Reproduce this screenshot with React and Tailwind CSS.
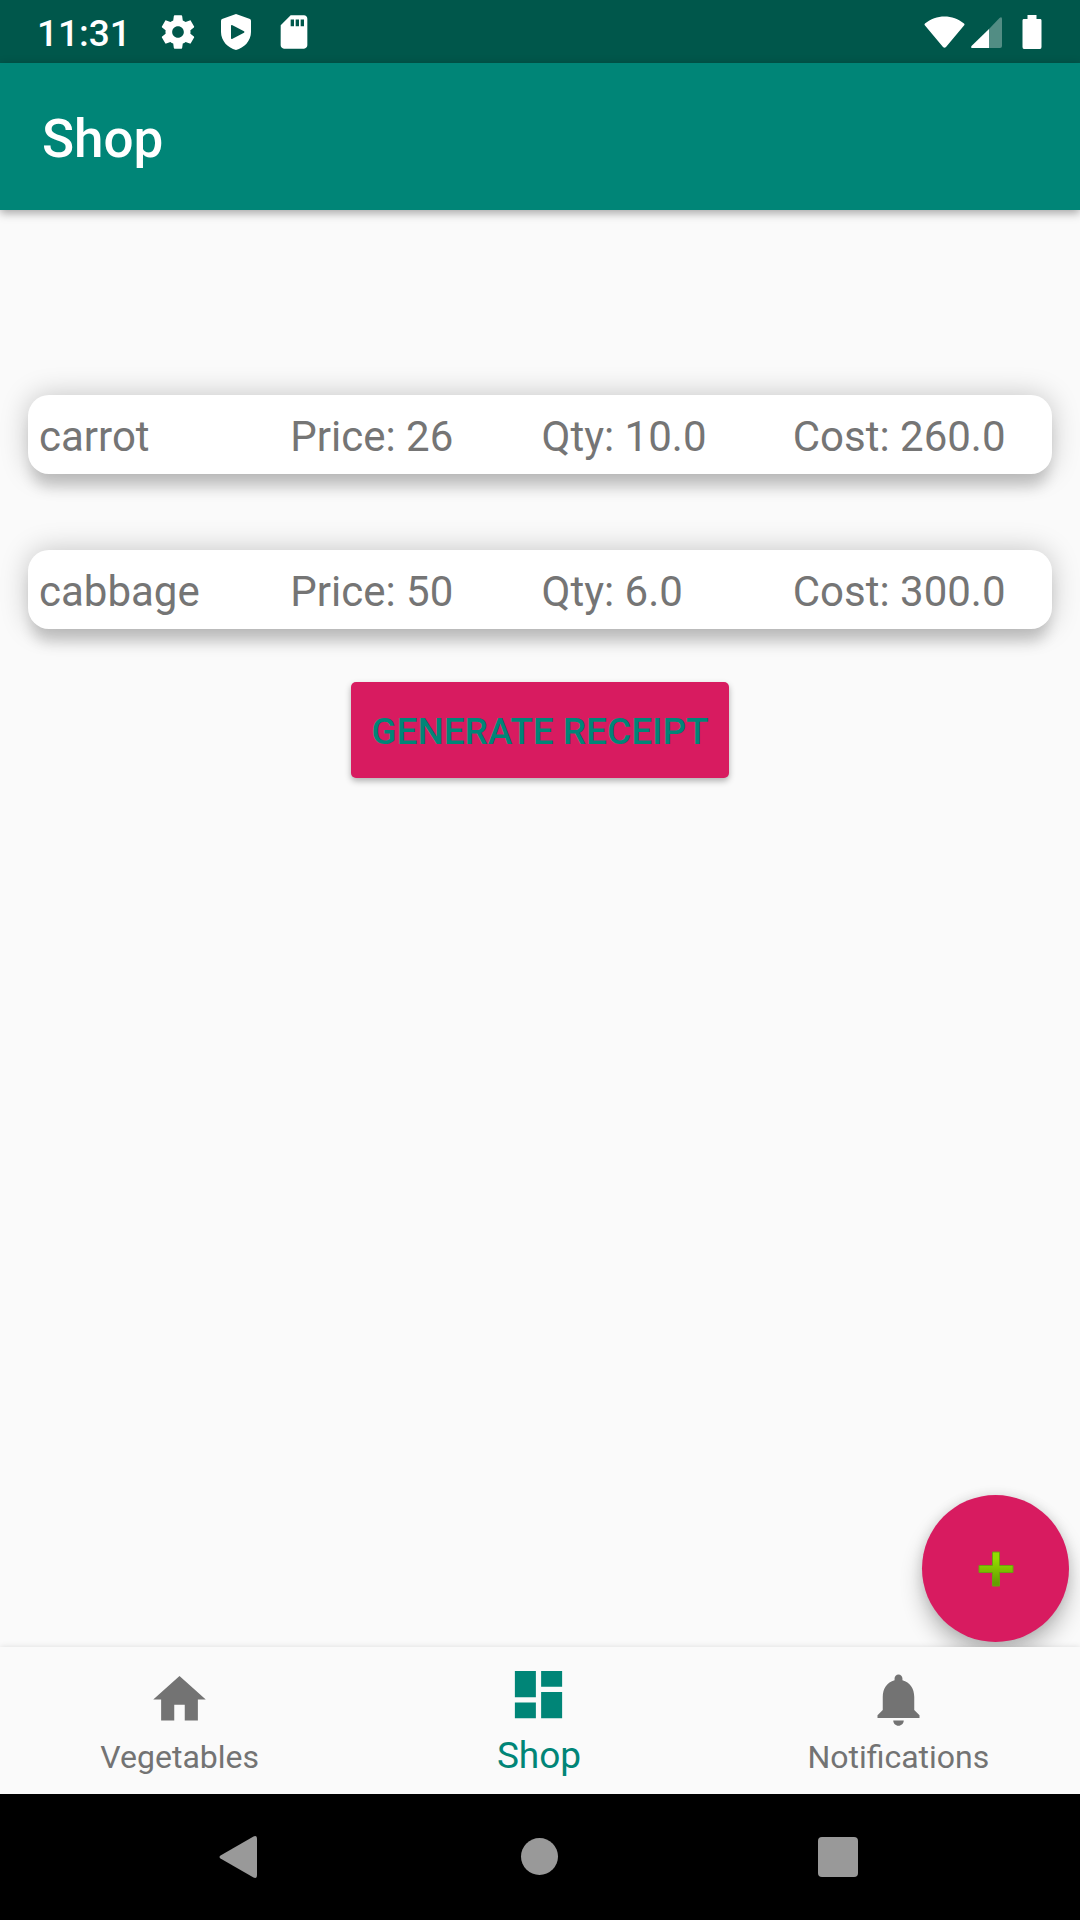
const items = [
  { name: "carrot", price: "26", qty: "10.0", cost: "260.0" },
  { name: "cabbage", price: "50", qty: "6.0", cost: "300.0" },
];

function GearIcon() {
  return (
    <svg className="size-10" viewBox="0 0 24 24" fill="currentColor" aria-hidden="true">
      <path d="M19.43 12.98c.04-.32.07-.64.07-.98s-.03-.66-.07-.98l2.11-1.65c.19-.15.24-.42.12-.64l-2-3.46c-.12-.22-.39-.3-.61-.22l-2.49 1c-.52-.4-1.08-.73-1.69-.98l-.38-2.65C14.46 2.18 14.25 2 14 2h-4c-.25 0-.46.18-.49.42l-.38 2.65c-.61.25-1.17.59-1.69.98l-2.49-1c-.23-.09-.49 0-.61.22l-2 3.46c-.13.22-.07.49.12.64l2.11 1.65c-.04.32-.07.65-.07.98s.03.66.07.98l-2.11 1.65c-.19.15-.24.42-.12.64l2 3.46c.12.22.39.3.61.22l2.49-1c.52.4 1.08.73 1.69.98l.38 2.65c.03.24.24.42.49.42h4c.25 0 .46-.18.49-.42l.38-2.65c.61-.25 1.17-.59 1.69-.98l2.49 1c.23.09.49 0 .61-.22l2-3.46c.12-.22.07-.49-.12-.64l-2.11-1.65zM12 15.5c-1.93 0-3.5-1.57-3.5-3.5s1.57-3.5 3.5-3.5 3.5 1.57 3.5 3.5-1.57 3.5-3.5 3.5z" />
    </svg>
  );
}

function ShieldIcon() {
  return (
    <svg className="size-10" viewBox="0 0 40 40" fill="currentColor" aria-hidden="true">
      <path
        fillRule="evenodd"
        d="M20 2 34 7Q35 7.500 35 9V20C35 29 28 36 20 38 12 36 5 29 5 20V9Q5 7.500 6 7ZM15 14V26Q15 27.500 16.500 26.700L28 20.700Q29 20 28 19.300L16.500 13.300Q15 12.500 15 14Z"
      />
    </svg>
  );
}

function SdCardIcon() {
  return (
    <svg className="size-10" viewBox="0 0 24 24" fill="currentColor" aria-hidden="true">
      <path d="M18 2h-8L4.020 8 4 20c0 1.100.9 2 2 2h12c1.100 0 2-.9 2-2V4c0-1.100-.9-2-2-2zm-6 6.500h-2V4.500h2v4zm3 0h-2V4.500h2v4zm3 0h-2V4.500h2v4z" />
    </svg>
  );
}

function WifiIcon() {
  return (
    <svg className="h-8 w-[41px]" viewBox="0 0 41 32" fill="currentColor" aria-hidden="true">
      <path d="M1 7.500C12-2 29-2 40 7.500Q41 8.500 40 9.500L22 31Q20.500 32.500 19 31L1 9.500Q0 8.500 1 7.500Z" />
    </svg>
  );
}

function SignalIcon() {
  return (
    <svg className="h-8 w-[31px]" viewBox="0 0 31 32" fill="currentColor" aria-hidden="true">
      <path opacity=".32" d="M18 13 28.500 2Q31 0 31 3V30Q31 32 29 32H18Z" />
      <path d="M18 13V32H1Q-.5 32 .5 30Z" />
    </svg>
  );
}

function BatteryIcon() {
  return (
    <svg className="h-[34px] w-5" viewBox="0 0 20 34" fill="currentColor" aria-hidden="true">
      <path d="M5.500 0h9v4H18.500q1 0 1 1.500V32q0 2-1.500 2h-16q-1.500 0-1.500-2V5.500q0-1.500 1-1.500h4Z" />
    </svg>
  );
}

function HomeIcon() {
  return (
    <svg className="size-[63px]" viewBox="0 0 24 24" fill="currentColor" aria-hidden="true">
      <path d="M10 20v-6h4v6h5v-8h3L12 3 2 12h3v8z" />
    </svg>
  );
}

function DashboardIcon() {
  return (
    <svg className="size-[63px]" viewBox="0 0 24 24" fill="currentColor" aria-hidden="true">
      <path d="M3 13h8V3H3v10zm0 8h8v-6H3v6zm10 0h8V11h-8v10zm0-18v6h8V3h-8z" />
    </svg>
  );
}

function BellIcon() {
  return (
    <svg className="size-[63px]" viewBox="0 0 24 24" fill="currentColor" aria-hidden="true">
      <path d="M12 22c1.100 0 2-.9 2-2h-4c0 1.100.89 2 2 2zm6-6v-5c0-3.070-1.640-5.640-4.500-6.320V4c0-.83-.67-1.500-1.500-1.500s-1.500.67-1.500 1.500v.68C7.630 5.360 6 7.920 6 11v5l-2 2v1h16v-1l-2-2z" />
    </svg>
  );
}

function StatusBar() {
  return (
    <div className="flex h-[63px] items-center justify-between bg-[#00574b] pr-[38px] pl-[37px] text-white">
      <div className="flex items-center">
        <span className="mr-[27px] pt-1 text-[37px] leading-none font-medium">11:31</span>
        <div className="flex items-center gap-[18px]">
          <GearIcon />
          <ShieldIcon />
          <SdCardIcon />
        </div>
      </div>
      <div className="flex items-center">
        <WifiIcon />
        <span className="mr-5 ml-1.5">
          <SignalIcon />
        </span>
        <BatteryIcon />
      </div>
    </div>
  );
}

function ItemCard({ item }) {
  return (
    <li className="grid h-[79px] grid-cols-4 items-center rounded-[21px] bg-white pt-1 pr-2 pl-[11px] text-[42px] leading-[49px] whitespace-nowrap text-[#757575] shadow-[0_0_28px_rgba(0,0,0,0.22),0_17px_14px_-4px_rgba(0,0,0,0.16)]">
      <span>{item.name}</span>
      <span>Price: {item.price}</span>
      <span>Qty: {item.qty}</span>
      <span>Cost: {item.cost}</span>
    </li>
  );
}

function BottomNav() {
  return (
    <nav className="relative z-10 grid h-[147px] grid-cols-3 bg-[#fafafa] pr-0.5 text-[32px] leading-[38px] text-[#737373] shadow-[0_0_6px_rgba(0,0,0,0.12)]">
      <a href="#vegetables" className="flex flex-col items-center pt-[21px]">
        <HomeIcon />
        <span className="mt-[7px]">Vegetables</span>
      </a>
      <a href="#shop" aria-current="page" className="flex flex-col items-center pt-4 text-[#008577]">
        <DashboardIcon />
        <span className="mt-2 text-[37px] leading-[43px]">Shop</span>
      </a>
      <a href="#notifications" className="flex flex-col items-center pt-[21px]">
        <BellIcon />
        <span className="mt-[7px]">Notifications</span>
      </a>
    </nav>
  );
}

function SystemKeys() {
  return (
    <div className="relative z-10 flex h-[126px] items-center justify-center gap-[258px] bg-black text-[#999]">
      <button type="button" aria-label="Back">
        <svg className="size-[42px]" viewBox="0 0 42 42" fill="currentColor" aria-hidden="true">
          <path d="M1.500 19.500 34.500 .5Q38 -1 38 3V39Q38 43 34.500 41.500L1.500 22.500Q-.5 21 1.500 19.500Z" />
        </svg>
      </button>
      <button type="button" aria-label="Home">
        <svg className="size-[42px]" viewBox="0 0 42 42" fill="currentColor" aria-hidden="true">
          <circle cx="20.500" cy="20.500" r="18.500" />
        </svg>
      </button>
      <button type="button" aria-label="Recent apps">
        <svg className="size-[42px] overflow-visible" viewBox="0 0 42 42" fill="currentColor" aria-hidden="true">
          <rect x="-1" y="1" width="40" height="40" rx="4" />
        </svg>
      </button>
    </div>
  );
}

export default function App() {
  return (
    <div className="flex min-h-screen flex-col bg-[#fafafa] font-[Roboto,sans-serif]">
      <StatusBar />
      <header className="flex h-[147px] items-center bg-[#008577] px-[42px] pt-1.5 shadow-[0_3px_9px_rgba(0,0,0,0.35)]">
        <h1 className="text-[53px] leading-none font-medium text-white">Shop</h1>
      </header>
      <main className="relative flex flex-1 flex-col items-center px-7 pt-[185px]">
        <ul className="flex w-full flex-col gap-[76px]">
          {items.map((item) => (
            <ItemCard key={item.name} item={item} />
          ))}
        </ul>
        <button
          type="button"
          className="mt-[53px] h-24 rounded-[5px] bg-[#d81b60] px-5 pt-0.5 text-[37px] leading-none font-medium text-[#008577] shadow-[0_3px_6px_rgba(0,0,0,0.3)]"
        >
          GENERATE RECEIPT
        </button>
        <button
          type="button"
          aria-label="Add item"
          className="absolute right-[11px] bottom-[5px] flex size-[147px] items-center justify-center rounded-full bg-[#d81b60] shadow-[0_14px_22px_rgba(0,0,0,0.24),0_0_12px_rgba(0,0,0,0.12)]"
        >
          <svg className="size-9" viewBox="0 0 36 36" aria-hidden="true">
            <defs>
              <linearGradient id="plus" x1="0" y1="0" x2="0" y2="1">
                <stop offset="0.2" stopColor="#92dc00" />
                <stop offset="0.9" stopColor="#659f00" />
              </linearGradient>
            </defs>
            <path
              d="M14.500 1h7v13.500H35v7H21.500V35h-7V21.500H1v-7h13.500Z"
              fill="url(#plus)"
              stroke="#6c9f10"
              strokeWidth="1"
              strokeLinejoin="round"
            />
          </svg>
        </button>
      </main>
      <BottomNav />
      <SystemKeys />
    </div>
  );
}
